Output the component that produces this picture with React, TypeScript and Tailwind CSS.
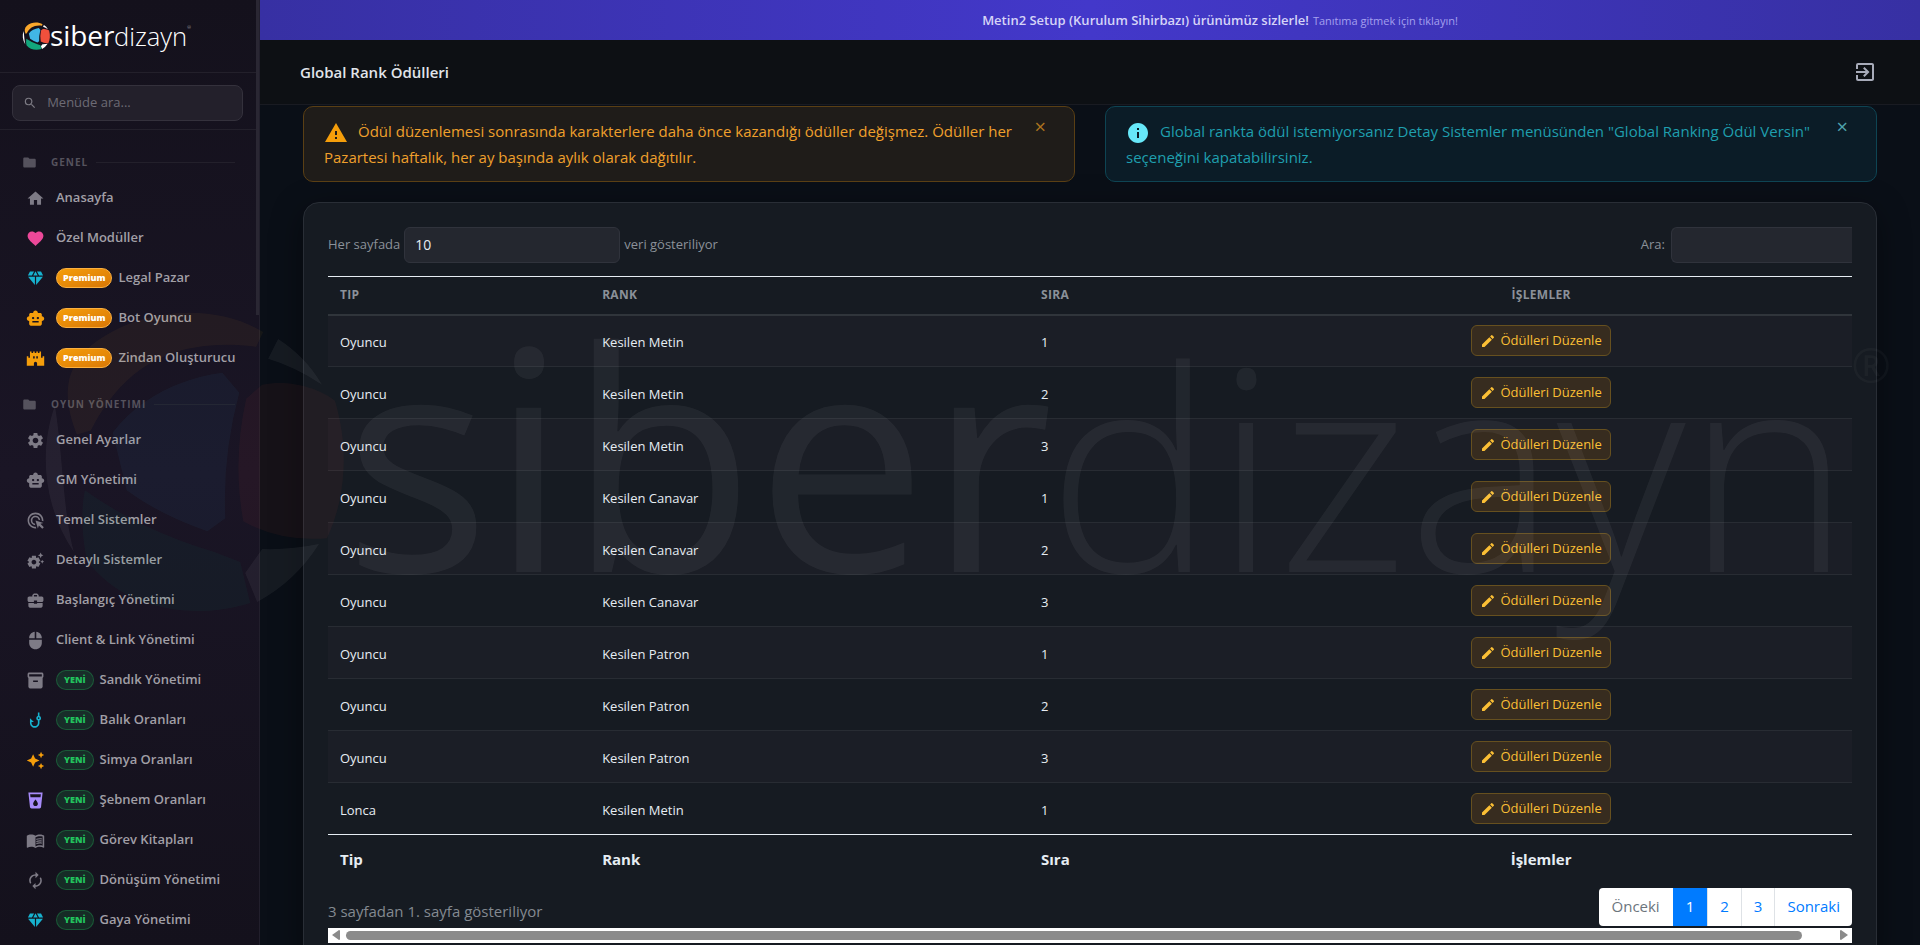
import type { ReactNode } from "react";
import { clsx } from "clsx";
import type { IconType } from "react-icons";
import {
  MdAdsClick,
  MdAutoAwesome,
  MdAutorenew,
  MdBusinessCenter,
  MdCastle,
  MdDiamond,
  MdEdit,
  MdExitToApp,
  MdFavorite,
  MdFolder,
  MdHome,
  MdInfo,
  MdInventory2,
  MdLocalDrink,
  MdMenuBook,
  MdMouse,
  MdPhishing,
  MdSearch,
  MdSettings,
  MdSettingsSuggest,
  MdSmartToy,
  MdWarning,
} from "react-icons/md";

type MenuItem = {
  label: string;
  icon: IconType;
  color?: string;
  badge?: "premium" | "new";
};

const menu: { title: string; items: MenuItem[] }[] = [
  {
    title: "GENEL",
    items: [
      { label: "Anasayfa", icon: MdHome },
      { label: "Özel Modüller", icon: MdFavorite, color: "text-[#ec4899]" },
      { label: "Legal Pazar", icon: MdDiamond, color: "text-[#17b2cf]", badge: "premium" },
      { label: "Bot Oyuncu", icon: MdSmartToy, color: "text-[#f59e0b]", badge: "premium" },
      { label: "Zindan Oluşturucu", icon: MdCastle, color: "text-[#f59e0b]", badge: "premium" },
    ],
  },
  {
    title: "OYUN YÖNETIMI",
    items: [
      { label: "Genel Ayarlar", icon: MdSettings },
      { label: "GM Yönetimi", icon: MdSmartToy },
      { label: "Temel Sistemler", icon: MdAdsClick },
      { label: "Detaylı Sistemler", icon: MdSettingsSuggest },
      { label: "Başlangıç Yönetimi", icon: MdBusinessCenter },
      { label: "Client & Link Yönetimi", icon: MdMouse },
      { label: "Sandık Yönetimi", icon: MdInventory2, badge: "new" },
      { label: "Balık Oranları", icon: MdPhishing, color: "text-[#17b2cf]", badge: "new" },
      { label: "Simya Oranları", icon: MdAutoAwesome, color: "text-[#f59e0b]", badge: "new" },
      { label: "Şebnem Oranları", icon: MdLocalDrink, color: "text-[#a78bfa]", badge: "new" },
      { label: "Görev Kitapları", icon: MdMenuBook, badge: "new" },
      { label: "Dönüşüm Yönetimi", icon: MdAutorenew, badge: "new" },
      { label: "Gaya Yönetimi", icon: MdDiamond, color: "text-[#17b2cf]", badge: "new" },
    ],
  },
];

const rows = [
  { type: "Oyuncu", rank: "Kesilen Metin", order: 1 },
  { type: "Oyuncu", rank: "Kesilen Metin", order: 2 },
  { type: "Oyuncu", rank: "Kesilen Metin", order: 3 },
  { type: "Oyuncu", rank: "Kesilen Canavar", order: 1 },
  { type: "Oyuncu", rank: "Kesilen Canavar", order: 2 },
  { type: "Oyuncu", rank: "Kesilen Canavar", order: 3 },
  { type: "Oyuncu", rank: "Kesilen Patron", order: 1 },
  { type: "Oyuncu", rank: "Kesilen Patron", order: 2 },
  { type: "Oyuncu", rank: "Kesilen Patron", order: 3 },
  { type: "Lonca", rank: "Kesilen Metin", order: 1 },
];

function Logo({ className }: { className?: string }) {
  return (
    <svg viewBox="37 305 1850 335" className={clsx("overflow-visible", className)} aria-hidden="true">
      <path fill="#fff" d="M54 405C38 450 42 505 73 552C62 510 62 455 54 405Z" />
      <path fill="#fff" d="M278 338L268 358Q295 366 322 384Q306 356 278 338Z" />
      <path fill="#fff" d="M245 573L262 549Q290 550 319 544Q295 582 257 602Z" />
      <path fill="#f9a72b" d="M76 434C62 398 62 370 90 345C140 305 215 302 263 331L256 346C170 335 120 370 90 430Z" />
      <path fill="#41b6e6" d="M112 432C138 398 178 378 222 372L239 392Q222 455 225 518L207 531Q160 515 126 490Z" />
      <path fill="#f0503c" d="M262 384C290 378 320 388 335 400C350 450 345 500 327 538Q280 542 243 521Q232 460 246 398Z" />
      <path fill="#12a67c" d="M84 490Q140 530 214 552L240 562L250 603C190 622 120 608 86 560Q78 520 84 490Z" />
      <text x="344" y="572" fill="#fff" fontSize="308" className="font-['Open_Sans',sans-serif] font-normal">
        siber
      </text>
      <text x="1050" y="572" fill="#fff" fontSize="282" className="font-['Open_Sans',sans-serif] font-light">
        dizayn
      </text>
      <text x="1857" y="382" fill="#fff" fillOpacity="0.6" fontSize="48" className="font-['Open_Sans',sans-serif]">
        ®
      </text>
    </svg>
  );
}

function MenuBadge({ kind }: { kind: "premium" | "new" }) {
  if (kind === "premium") {
    return (
      <span className="flex h-5 items-center rounded-full border border-[#fbb040] bg-linear-to-br from-[#f59e0b] to-[#d97706] px-[6px] text-[9px] font-extrabold text-white">
        Premium
      </span>
    );
  }
  return (
    <span className="flex h-5 items-center rounded-full border border-[#22c55e]/30 bg-[#22c55e]/15 px-[7px] text-[9px] font-extrabold text-[#22c55e]">
      YENİ
    </span>
  );
}

function Sidebar() {
  return (
    <aside className="relative flex w-[260px] shrink-0 flex-col overflow-hidden border-r border-[#221f2c] bg-linear-to-b from-[#14111c] via-[#1a1525] to-[#14111c]">
      <a
        href="#"
        aria-label="siberdizayn"
        className="flex h-[73px] shrink-0 items-center border-b border-[#23202b] pt-[3px] pl-[22px]"
      >
        <Logo className="w-[168px]" />
      </a>

      <div className="shrink-0 border-b border-[#23202b] pt-3 pr-4 pb-2 pl-3">
        <label className="flex h-9 items-center gap-[10px] rounded-lg border border-[#34313c] bg-[#23202b] px-[10px]">
          <MdSearch className="size-4 text-[#7d7b84]" />
          <input
            type="text"
            aria-label="Menüde ara"
            placeholder="Menüde ara..."
            className="w-full bg-transparent text-[13px] text-white outline-none placeholder:text-[#6d6b75]"
          />
        </label>
      </div>

      <nav className="pt-4">
        {menu.map((group) => (
          <section key={group.title} className="mb-[10px]">
            <h2 className="flex h-8 items-center pr-6 pl-[22px] text-[10px] font-bold tracking-widest text-[#55525d]">
              <MdFolder className="mr-[14px] size-[15px]" />
              {group.title}
              <span className="ml-2 h-px flex-1 bg-[#23202b]" />
            </h2>
            <ul>
              {group.items.map(({ label, icon: Icon, color, badge }) => (
                <li key={label}>
                  <a href="#" className="flex h-10 items-center pl-[26px] text-[13px] font-semibold whitespace-nowrap text-[#a19fa6]">
                    <Icon className={clsx("mr-[11px] size-[19px] shrink-0", color ?? "text-[#7e7b86]")} />
                    <span className="flex items-center gap-[6px]">
                      {badge && <MenuBadge kind={badge} />}
                      {label}
                    </span>
                  </a>
                </li>
              ))}
            </ul>
          </section>
        ))}
      </nav>

      {/* scroll thumb */}
      <div className="absolute top-0 right-0 h-1/3 w-[3px] bg-[#2a2733]" />
    </aside>
  );
}

function Alert({ tone, children }: { tone: "warning" | "info"; children: ReactNode }) {
  const warning = tone === "warning";
  return (
    <div
      role="alert"
      className={clsx(
        "relative rounded-[10px] border py-[11px] pr-12 pl-5 text-[15px] leading-[26px]",
        warning ? "border-[#5a3f14] bg-[#1f1c19] text-[#f0a02c]" : "border-[#0e4453] bg-[#0b1c27] text-[#1f9fae]"
      )}
    >
      {warning ? (
        <MdWarning className="-my-1 mr-[10px] inline size-6 text-[#f59e0b]" />
      ) : (
        <MdInfo className="-my-1 mr-[10px] inline size-6 text-[#67e8f9]" />
      )}
      {children}
      <button
        type="button"
        aria-label="Kapat"
        className={clsx("absolute top-[7px] right-7 text-xl leading-[26px]", warning ? "text-[#ac731f]" : "text-[#4fa3ae]")}
      >
        ×
      </button>
    </div>
  );
}

function RankTable() {
  return (
    <table className="w-full table-fixed border-collapse text-left">
      <colgroup>
        <col className="w-[17.2%]" />
        <col className="w-[28.8%]" />
        <col className="w-[13.2%]" />
        <col />
      </colgroup>
      <thead>
        <tr className="h-[38px] border-t border-b-2 border-t-[#e6edf3] border-b-[#30353b] text-xs tracking-wide text-[#8b9199]">
          <th className="px-3 font-bold">TIP</th>
          <th className="px-3 font-bold">RANK</th>
          <th className="px-3 font-bold">SIRA</th>
          <th className="px-3 text-center font-bold">İŞLEMLER</th>
        </tr>
      </thead>
      <tbody>
        {rows.map((row, i) => (
          <tr
            key={i}
            className="h-[52px] border-b border-[#282c33] text-[13px] text-[#e6edf3] last:border-[#e6edf3] odd:bg-[#1b1e26]"
          >
            <td className="px-3 pt-1">{row.type}</td>
            <td className="px-3 pt-1">{row.rank}</td>
            <td className="px-3 pt-1">{row.order}</td>
            <td className="px-3 text-center">
              <button
                type="button"
                className="inline-flex h-[31px] items-center gap-1 rounded-md border border-[#66501f] bg-[#372c1f] px-2 text-[13px] text-[#fbbf35]"
              >
                <MdEdit className="size-4" />
                Ödülleri Düzenle
              </button>
            </td>
          </tr>
        ))}
      </tbody>
      <tfoot>
        <tr className="h-12 text-[15px] text-[#e6edf3]">
          <th className="px-3">Tip</th>
          <th className="px-3">Rank</th>
          <th className="px-3">Sıra</th>
          <th className="px-3 text-center">İşlemler</th>
        </tr>
      </tfoot>
    </table>
  );
}

function Pagination() {
  const link = "border-l border-[#dee2e6] px-3 text-[#007bff]";
  return (
    <nav aria-label="Sayfalama" className="flex h-[38px] overflow-hidden rounded bg-white text-[15px] *:flex *:items-center">
      <button type="button" disabled className="px-[13px] text-[#6c757d]">
        Önceki
      </button>
      <button type="button" className="bg-[#007bff] px-[13px] text-white">
        1
      </button>
      <button type="button" className={link}>
        2
      </button>
      <button type="button" className={link}>
        3
      </button>
      <button type="button" className={link}>
        Sonraki
      </button>
    </nav>
  );
}

export default function App() {
  return (
    <div className="flex h-screen overflow-hidden bg-[#0a0f17] font-['Open_Sans','Noto_Sans',sans-serif]">
      <Sidebar />

      <main className="min-w-0 flex-1 overflow-y-auto [scrollbar-width:none]">
        {/* text is centred past the sidebar's own width */}
        <a
          href="#"
          className="flex h-10 items-center justify-center gap-1 bg-linear-to-r from-[#3730a3] via-[#4338ca] to-[#3730a3] pt-[2px] pl-[260px] text-[13px] font-semibold text-[#d6d4f7]"
        >
          Metin2 Setup (Kurulum Sihirbazı) ürünümüz sizlerle!
          <small className="text-[11px] font-normal text-[#a5a0ee]">Tanıtıma gitmek için tıklayın!</small>
        </a>

        <header className="flex h-[65px] items-center justify-between border-b border-[#191b22] bg-[#0d1014] pr-[43px] pl-10">
          <h1 className="text-[15px] font-semibold text-[#e1e5ea]">Global Rank Ödülleri</h1>
          <button type="button" aria-label="Çıkış" className="text-[#a7abb9]">
            <MdExitToApp className="size-6" />
          </button>
        </header>

        <div className="px-[43px] pt-px">
          <div className="grid grid-cols-2 gap-[30px]">
            <Alert tone="warning">
              Ödül düzenlemesi sonrasında karakterlere daha önce kazandığı ödüller değişmez. Ödüller her Pazartesi haftalık,
              her ay başında aylık olarak dağıtılır.
            </Alert>
            <Alert tone="info">
              Global rankta ödül istemiyorsanız Detay Sistemler menüsünden "Global Ranking Ödül Versin" seçeneğini
              kapatabilirsiniz.
            </Alert>
          </div>

          <section className="mt-5 rounded-2xl border border-[#292e36] bg-[#161b22] p-6 shadow-[0_8px_32px_rgba(0,0,0,0.4)]">
            <div className="overflow-hidden">
              <div className="mb-[13px] flex items-center justify-between text-[13px] text-[#8b9199]">
                <label className="flex items-center gap-1">
                  Her sayfada
                  <select
                    defaultValue="10"
                    className="h-9 w-[216px] appearance-none rounded-md border border-[#30333c] bg-[#24272f] px-[10px] text-sm text-[#e6edf3]"
                  >
                    <option>10</option>
                    <option>25</option>
                    <option>50</option>
                    <option>100</option>
                  </select>
                  veri gösteriliyor
                </label>
                <label className="flex items-center gap-[6px]">
                  Ara:
                  <input
                    type="search"
                    className="h-9 w-[181px] rounded-l-md border border-r-0 border-[#30333c] bg-[#24272f] px-3 text-sm text-[#e6edf3] outline-none"
                  />
                </label>
              </div>

              <RankTable />

              <div className="mt-[5px] flex items-center justify-between">
                <p className="pt-[10px] text-[15px] text-[#848a91]">3 sayfadan 1. sayfa gösteriliyor</p>
                <Pagination />
              </div>

              {/* horizontal scroll bar of the table */}
              <div className="mt-[2px] flex h-[15px] items-center gap-[6px] bg-white px-1 text-[#8b8b8b]">
                <svg viewBox="0 0 8 10" className="h-[10px] w-2 fill-current">
                  <path d="M7 0Q8 0 8 1V9Q8 10 7 10L0 5Z" />
                </svg>
                <span className="mr-8 h-[9px] flex-1 rounded-full bg-current" />
                <svg viewBox="0 0 8 10" className="h-[10px] w-2 fill-current">
                  <path d="M1 0Q0 0 0 1V9Q0 10 1 10L8 5Z" />
                </svg>
              </div>
            </div>
          </section>
        </div>
      </main>

      {/* brand watermark over the whole panel */}
      <div className="pointer-events-none fixed inset-0 flex items-center justify-center opacity-[0.05]">
        <Logo className="w-[96%]" />
      </div>
    </div>
  );
}
